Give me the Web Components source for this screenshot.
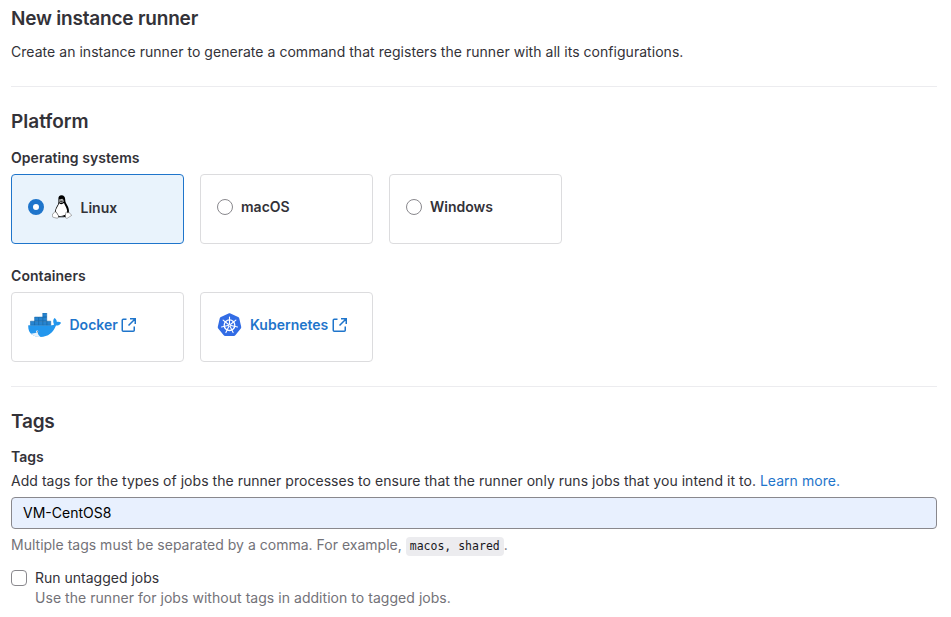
<!DOCTYPE html>
<html lang="en">
<head>
<meta charset="utf-8">
<title>New instance runner</title>
<style>
  body { margin: 0; background: #fff; }
</style>
</head>
<body>
<runner-form></runner-form>
<script>
const define = (name, html) => {
  const t = document.createElement('template');
  t.innerHTML = html;
  customElements.define(name, class extends HTMLElement {
    constructor() {
      super();
      this.attachShadow({ mode: 'open' }).appendChild(t.content.cloneNode(true));
    }
  });
};

define('section-title', `
<style>
  :host { display: block; height: 24px; font-size: 19px; line-height: 24px; font-weight: 600; letter-spacing: var(--ls, 0); white-space: nowrap; }
</style><slot></slot>`);

define('field-label', `
<style>
  :host { display: block; height: 20px; line-height: 20px; font-weight: 600; letter-spacing: var(--ls, 0); white-space: nowrap; }
</style><slot></slot>`);

define('rule-line', `
<style>
  :host { display: block; height: 1px; background: #ececef; }
</style>`);

define('card-row', `
<style>
  :host { display: flex; gap: 16px; }
</style><slot></slot>`);

define('platform-card', `
<style>
  :host { display: flex; box-sizing: border-box; width: 173px; height: 70px; padding: 0 16px 4px; align-items: center; border: 1px solid #dcdcde; border-radius: 4px; font-weight: 600; white-space: nowrap; }
  :host([checked]) { background: #e9f3fc; border-color: #1f75cb; }
</style><slot></slot>`);

define('radio-dot', `
<style>
  :host { display: block; box-sizing: border-box; width: 16px; height: 16px; margin-right: 8px; border: 1px solid #89888d; border-radius: 50%; background: #fff; flex: none; }
  :host([checked]) { border: 5px solid #1f75cb; }
</style>`);

define('card-text', `
<style>
  :host { display: block; line-height: 20px; letter-spacing: var(--ls, 0); }
</style><slot></slot>`);

define('tux-icon', `
<style>:host { display: block; width: 20px; height: 24px; flex: none; } svg { display: block; }</style>
<svg width="20" height="24" viewBox="0 0 20 24">
  <path d="M6.400 4.400C6.200 1.500 7.400.2 9.500.2c2.400 0 3.700 1.600 3.700 4.400 0 2.500.8 3.700 2 5.700 1.400 2.400 2.200 5 1.500 7.600l-1.600 3.600H5l-2-4c0-2.700 1.100-4.900 2.300-6.900 1-1.700 1.300-3.200 1.100-6.200Z" fill="#000"/>
  <path d="M7.200 8.300c1.500 1.300 3.300 1 4.800-.3.700 2.300 2.700 4.700 3.100 7.500.2 1.600-.3 2.600-.9 3.300-1.300 2.100-6.100 2.700-8 1.600-.3-1.500-2-3-2.300-4.200-.2-2.500 2.200-4.900 3.300-7.900Z" fill="#fff"/>
  <path d="M7.300 4.500c.6-.8 1.200-.6 1.500 0 .6-.9 1.900-1 2.400 0l.5 1.900c-1 1.400-2.700 1.900-4.300.9Z" fill="#ddd"/>
  <path d="M7.700 4.500h.8v.9h-.8zm2.100 0h.9v.9h-.9zM7.300 6.200l2-.6 2 .6-2 1.200z" fill="#444"/>
  <path d="M2.800 16.600c1.400.2 2.300 2 3.400 3.600.9 1.400.5 2.900-1.100 3-1.600 0-2.900-.9-4.500-1.200-.6-.4 0-1.600-.1-2.900.3-.9 1.400-.2 2.300-2.500Zm11.100 1.200c-.1-1 .6-1.200 1.200-.3.8.5 1.600.3 2-.3.8.8.7 1.900 2.400 2.700.4.700-.9 1.200-2.200 2-1.200.8-2.200 1.900-3.500 1.100-1.200-1-.3-3.100.1-5.200Z" fill="#fff" stroke="#555" stroke-width=".5"/>
  <path d="M6.400 21.100c2.300.9 4.700.8 7.100-.4l-.2 1.400c-2.200.3-4.400.3-6.800.1Z"/>
</svg>`);

define('docker-icon', `
<style>:host { display: block; width: 33.500px; height: 24px; flex: none; } svg { display: block; }</style>
<svg width="33.500" height="24" viewBox="0 0 34 24" preserveAspectRatio="none">
  <path d="M.3 12.200h23.200c1.500 0 2.400-.3 3-.7-1.300-1.800-1.200-4.700.4-6.400 1.500 1 2.300 2.300 2.400 3.800 1.600-.3 3.200-.1 4.300.8-.9 2-2.700 2.900-5.200 2.900C25.700 19.700 20.500 24 12.600 24 4.500 24-.4 19.600.3 12.200Z" fill="#2396ed"/>
  <path d="M2.500 8.200h4.100v4H2.500zm4.200 0h4v4h-4zm4.100 0h4v4h-4zm4.200 0h4v4h-4zm4.100 0h4v4h-4zM6.700 4.100h4v4h-4zm4.100 0h4v4h-4zm4.200 0h4v4h-4zM15 0h4v4h-4z" fill="#2684d0" stroke="#1768aa" stroke-width=".55"/>
  <path d="M3.100 20.400c2.500.2 4.800-.2 6.800-1.100 0 2 1.300 3.500 3.100 4.500C8.700 24.200 5.200 23 3.100 20.400Z" fill="#e9f3fb"/>
  <circle cx="9.300" cy="18.700" r="1.100" fill="#fff"/><circle cx="9.500" cy="18.800" r=".5" fill="#235"/>
</svg>`);

define('kubernetes-icon', `
<style>:host { display: block; width: 25px; height: 24px; flex: none; } svg { display: block; }</style>
<svg width="25" height="24" viewBox="0 0 25 24">
  <path d="M11.500.4c.7-.3 1.300-.3 2 0l7.600 3.700c.7.3 1 .8 1.200 1.500l1.900 8.100c.1.700 0 1.200-.4 1.800l-5.300 6.600c-.4.600-1 .8-1.700.8H8.200c-.7 0-1.200-.2-1.700-.8l-5.300-6.600c-.4-.6-.5-1.100-.4-1.800l1.900-8.100c.2-.7.600-1.200 1.200-1.500Z" fill="#326ce5"/>
  <g stroke="#fff" fill="none" stroke-width="1.100" stroke-linecap="round">
    <circle cx="12.500" cy="12.200" r="5.300" stroke-width="1.300"/>
    <path d="M12.500 10.700V4M13.700 11.300l5.200-4.200M14 12.500l6.500 1.500M13.200 13.600l2.900 6M11.800 13.600l-2.900 6M11 12.500 4.500 14M11.300 11.300 6.100 7.100"/>
  </g>
  <circle cx="12.500" cy="12.200" r="1.300" fill="#fff"/><circle cx="12.500" cy="12.200" r=".5" fill="#326ce5"/>
</svg>`);

define('external-icon', `
<style>:host { display: block; width: 16px; height: 16px; margin-left: 3.500px; flex: none; } svg { display: block; }</style>
<svg width="16" height="16" viewBox="0 0 16 16" fill="none" stroke="currentColor" stroke-width="1.500">
  <path d="M5.500 2.250H2.250a1 1 0 0 0-1 1v10a1 1 0 0 0 1 1h10a1 1 0 0 0 1-1V9.500M9 1.750h5.250V7M14 2 7.500 8.500"/>
</svg>`);

define('tag-input', `
<style>
  :host { display: flex; box-sizing: border-box; height: 32px; padding: 0 11px; align-items: center; border: 1px solid #89888d; border-radius: 4px; background: #e8f0fe; color: #000; letter-spacing: var(--ls, 0); }
</style><slot></slot>`);

define('code-chip', `
<style>
  :host { display: inline-block; height: 19px; line-height: 19px; padding: 0 4px; border-radius: 4px; background: #ececef; color: #18171d; font-family: "DejaVu Sans Mono", monospace; font-size: 11.500px; letter-spacing: 0; }
</style><slot></slot>`);

define('check-field', `
<style>
  :host { display: flex; gap: 8px; line-height: 20px; }
  .box { box-sizing: border-box; width: 16px; height: 16px; margin-top: 2px; border: 1px solid #89888d; border-radius: 4px; flex: none; }
</style><span class="box"></span><div><slot></slot></div>`);

define('text-line', `
<style>
  :host { display: block; height: 20px; line-height: 20px; letter-spacing: var(--ls, 0); white-space: nowrap; }
  :host([muted]) { color: #737278; }
</style><slot></slot>`);

define('runner-form', `
<style>
  :host { display: block; box-sizing: border-box; width: 951px; height: 617px; padding: 7px 14px 0 11px; overflow: hidden; background: #fff; color: #333238; font: 14px/20px Inter, sans-serif; }
  a { color: #1f75cb; text-decoration: none; }
  platform-card.link { color: #1f75cb; }
</style>
<section-title style="--ls:-.2px">New instance runner</section-title>
<text-line style="margin-top:11px;--ls:.038px">Create an instance runner to generate a command that registers the runner with all its configurations.</text-line>
<rule-line style="margin-top:24px"></rule-line>
<section-title style="margin-top:23px">Platform</section-title>
<field-label style="margin-top:14px;--ls:.05px">Operating systems</field-label>
<card-row style="margin-top:6px">
  <platform-card checked><radio-dot checked></radio-dot><tux-icon></tux-icon><card-text style="margin:2px 0 0 8.500px">Linux</card-text></platform-card>
  <platform-card><radio-dot></radio-dot><card-text>macOS</card-text></platform-card>
  <platform-card><radio-dot></radio-dot><card-text>Windows</card-text></platform-card>
</card-row>
<field-label style="margin-top:22px;--ls:.06px">Containers</field-label>
<card-row style="margin-top:6px">
  <platform-card class="link"><docker-icon></docker-icon><card-text style="margin-left:8px">Docker</card-text><external-icon></external-icon></platform-card>
  <platform-card class="link"><kubernetes-icon></kubernetes-icon><card-text style="margin-left:8px">Kubernetes</card-text><external-icon></external-icon></platform-card>
</card-row>
<rule-line style="margin-top:24px"></rule-line>
<section-title style="margin-top:23px;--ls:-.2px">Tags</section-title>
<field-label style="margin-top:13px">Tags</field-label>
<text-line style="margin-top:4px;--ls:.034px">Add tags for the types of jobs the runner processes to ensure that the runner only runs jobs that you intend it to. <a>Learn more.</a></text-line>
<tag-input style="margin-top:6px">VM-CentOS8</tag-input>
<text-line muted style="margin-top:6px;--ls:.01px">Multiple tags must be separated by a comma. For example, <code-chip>macos, shared</code-chip>.</text-line>
<check-field style="margin-top:13px"><text-line>Run untagged jobs</text-line><text-line muted style="--ls:.042px">Use the runner for jobs without tags in addition to tagged jobs.</text-line></check-field>
`);
</script>
</body>
</html>
